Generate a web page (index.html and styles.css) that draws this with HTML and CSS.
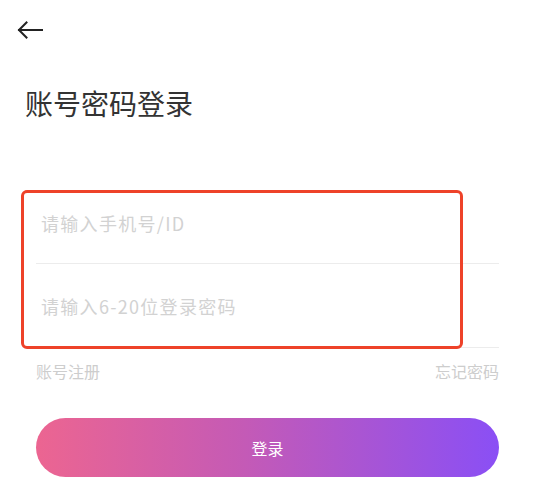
FILE: index.html
```html
<!DOCTYPE html>
<html lang="zh-CN">
<head>
<meta charset="utf-8">
<link rel="stylesheet" href="styles.css">
</head>
<body>
<div class="page">
  <header class="header">
    <svg class="back" width="26" height="18" viewBox="0 0 26 18">
      <path d="M25 9H2M9.5 1.5L2 9l7.5 7.5" fill="none" stroke="#222" stroke-width="2" stroke-linecap="square"/>
    </svg>
  </header>
  <h1 class="title">账号密码登录</h1>
  <form class="form">
    <div class="row"><input class="field" type="text" placeholder="请输入手机号/ID"></div>
    <div class="row"><input class="field" type="password" placeholder="请输入6-20位登录密码"></div>
  </form>
  <div class="links">
    <span>账号注册</span>
    <span>忘记密码</span>
  </div>
  <button class="submit" type="button">登录</button>
  <div class="highlight"></div>
</div>
</body>
</html>
```

FILE: styles.css
```css
html, body {
  margin: 0;
  padding: 0;
  background: #fff;
}
body {
  font-family: "Noto Sans CJK SC", "Noto Sans", sans-serif;
  color: #333;
}
.page {
  position: relative;
  width: 535px;
  height: 491px;
  overflow: hidden;
}
.header {
  height: 60px;
  display: flex;
  align-items: center;
  padding-left: 17px;
}
.back {
  display: block;
}
.title {
  margin: 23px 0 0 25px;
  font-size: 28px;
  line-height: 40px;
  font-weight: 400;
  color: #333;
}
.form {
  margin: 57px 36px 0;
}
.row {
  height: 83px;
  border-bottom: 1px solid #ececec;
  display: flex;
  align-items: center;
  padding-left: 5px;
}
.row:first-child {
  padding-top: 3px;
  height: 80px;
}
.field {
  border: 0;
  outline: none;
  background: transparent;
  font-family: inherit;
  font-size: 18px;
  letter-spacing: 1.3px;
  width: 100%;
  padding: 0;
  color: #333;
}
.field::placeholder {
  color: #d2d2d2;
}
.links {
  margin: 11px 36px 0;
  display: flex;
  justify-content: space-between;
  font-size: 16px;
  line-height: 24px;
  color: #cdcdcd;
}
.submit {
  display: block;
  margin: 35px 36px 0;
  width: calc(100% - 72px);
  height: 59px;
  border: 0;
  border-radius: 30px;
  background: linear-gradient(90deg, #ec6591 0%, #c45ab6 45%, #8a4ff5 100%);
  color: #fff;
  font-family: inherit;
  font-size: 16px;
  padding: 0;
}
.highlight {
  position: absolute;
  left: 21px;
  top: 190px;
  width: 436px;
  height: 153px;
  border: 3px solid #ee4229;
  border-radius: 6px;
  pointer-events: none;
}
```
